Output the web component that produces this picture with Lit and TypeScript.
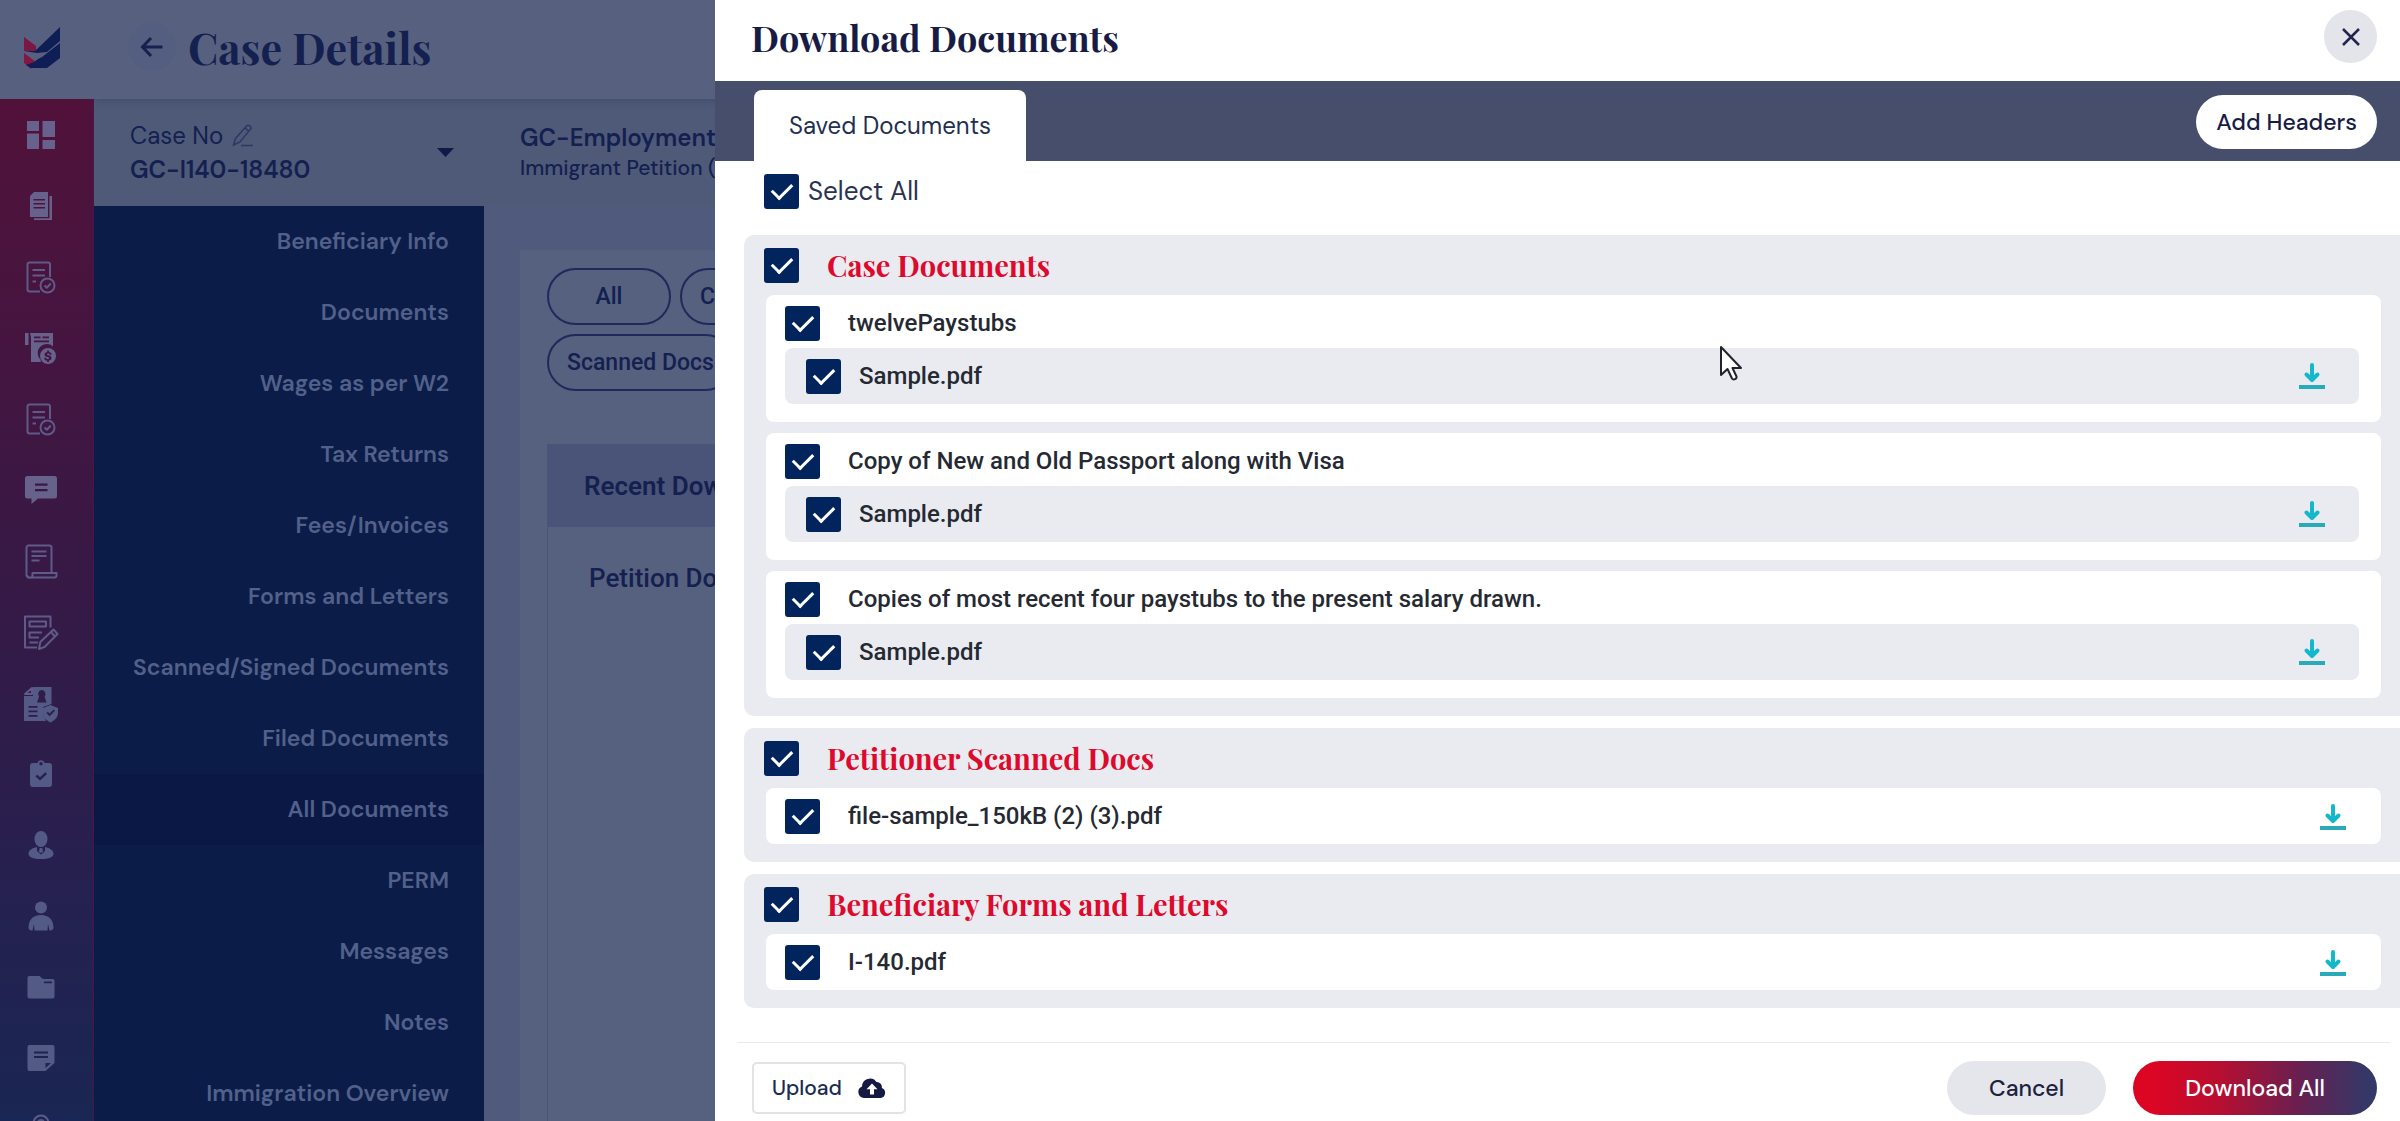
import { LitElement, html, css, svg, nothing, TemplateResult, SVGTemplateResult } from "lit";
import { customElement, state } from "lit/decorators.js";
import { classMap } from "lit/directives/class-map.js";

interface DocItem {
  id: string;
  name: string;
  files?: { id: string; name: string }[];
}
interface DocGroup {
  id: string;
  title: string;
  items: DocItem[];
}

const GROUPS: DocGroup[] = [
  {
    id: "case",
    title: "Case Documents",
    items: [
      { id: "case-1", name: "twelvePaystubs", files: [{ id: "case-1-1", name: "Sample.pdf" }] },
      { id: "case-2", name: "Copy of New and Old Passport along with Visa", files: [{ id: "case-2-1", name: "Sample.pdf" }] },
      {
        id: "case-3",
        name: "Copies of most recent four paystubs to the present salary drawn.",
        files: [{ id: "case-3-1", name: "Sample.pdf" }],
      },
    ],
  },
  { id: "petitioner", title: "Petitioner Scanned Docs", items: [{ id: "petitioner-1", name: "file-sample_150kB (2) (3).pdf" }] },
  { id: "forms", title: "Beneficiary Forms and Letters", items: [{ id: "forms-1", name: "I-140.pdf" }] },
];

const MENU = [
  "Beneficiary Info",
  "Documents",
  "Wages as per W2",
  "Tax Returns",
  "Fees/Invoices",
  "Forms and Letters",
  "Scanned/Signed Documents",
  "Filed Documents",
  "All Documents",
  "PERM",
  "Messages",
  "Notes",
  "Immigration Overview",
];

const checkedDoc = svg`
  <path class="line" d="M17 32.500H6.500a2 2 0 0 1-2-2V5.500a2 2 0 0 1 2-2h18.500a2 2 0 0 1 2 2V18"/>
  <path class="line" d="M9.500 11H22M9.500 16.500H22M9.500 22.500h3.500"/>
  <circle class="line" cx="24.500" cy="26.500" r="7"/>
  <path class="line" d="M21.500 26.500l2.300 2.300 4-4.300"/>`;

const RAIL: { label: string; icon: SVGTemplateResult }[] = [
  {
    label: "Dashboard",
    icon: svg`<path d="M4 4h12v10H4zM19.500 4h12.500v16H19.500zM4 16.500h12V32H4zM19.500 23h12.500v9H19.500z"/>`,
  },
  {
    label: "Cases",
    icon: svg`<path fill-rule="evenodd" d="M11 4h14v25H7V8zM10.500 11v1.600H22V11zM10.500 15v1.600H22V15zM10.500 19v1.600H22V19z"/><path d="M26.500 8H29v24H11v-1.800h15.500z"/>`,
  },
  { label: "Tasks", icon: checkedDoc },
  {
    label: "Billing",
    icon: svg`<path d="M2 3h3.500v12H2z"/><path fill-rule="evenodd" d="M7 3h23v13.500a9 9 0 0 0-12.500 13.200L18 32H8V8zM11 6.500v1.700h6.500V6.500zM19.500 6.500v1.700H26V6.500zM11 10.500v1.700h15v-1.700z"/><path fill-rule="evenodd" d="M25 18a8 8 0 1 1 0 16 8 8 0 0 1 0-16zm-.8 2.500v1.400c-3.800.6-3.300 4.700.3 5.100 2.300.3 1.900 2 .4 2-1.200 0-1.700-.4-1.800-1.300h-2c.1 1.600 1.200 2.700 3.100 3v1.300h1.700v-1.400c3.800-.6 3.300-4.900-.2-5.300-2.300-.3-1.900-1.800-.5-1.800 1 0 1.500.4 1.600 1.200h2c-.1-1.500-1.200-2.500-2.900-2.800v-1.400z"/>`,
  },
  { label: "Approvals", icon: checkedDoc },
  {
    label: "Messages",
    icon: svg`<path fill-rule="evenodd" d="M4.500 4h27A2.500 2.500 0 0 1 34 6.500V24a2.500 2.500 0 0 1-2.500 2.500H15L8.500 32v-5.500h-4A2.500 2.500 0 0 1 2 24V6.500A2.500 2.500 0 0 1 4.500 4zM12 11.500v2.200h12.500v-2.200zM12 17v2.200h12.500V17z"/>`,
  },
  {
    label: "Forms",
    icon: svg`<path class="line" d="M28.500 29V4.500a2 2 0 0 0-2-2H5.500a2 2 0 0 0-2 2v27.500a3 3 0 0 0 3 2.500h25a2 2 0 0 0 2-2V30h-24v2.200a2.600 2.600 0 0 1-5.200 0"/><path class="line" d="M8.500 8.500h15M8.500 13h15M8.500 17.500h8"/>`,
  },
  {
    label: "Drafts",
    icon: svg`<path class="line" d="M14 33.500H2V2.500h25.500v11M6.500 7.500h16.500v5H6.500zM16 23.500H6.500v-5H19M6.500 28.500h8.500"/><path class="line" d="M16 35l1.300-7L30.500 15.500l4 4.500L21.500 33zM28 18l4 4.500"/>`,
  },
  {
    label: "Identity",
    icon: svg`<path fill-rule="evenodd" d="M10 2h18.500v17l-8.500 3v7l3 7H1V11h9zM19 5a4 4 0 0 0-3 6.500l-2 6h9.500l-2-6A4 4 0 0 0 19 5zM5.500 21v1.800h9V21zM5.500 25.500v1.800h9v-1.800zM5.500 30v1.800h9V30z"/><path class="line" d="M2 9l7-6v6z"/><path fill-rule="evenodd" d="M27.500 20l7.500 3v5c0 4.500-3.500 7.500-7.500 9.500-4-2-7.500-5-7.500-9.500v-5zm-4 8l3 3.200 5.500-5.500-1.300-1.300-4.200 4.200-1.700-1.800z"/>`,
  },
  {
    label: "Checklist",
    icon: svg`<path fill-rule="evenodd" d="M14.500 7a3.600 3.600 0 0 1 7 0H26a3 3 0 0 1 3 3v18a3 3 0 0 1-3 3H10a3 3 0 0 1-3-3V10a3 3 0 0 1 3-3zM18 6a1.700 1.700 0 1 0 0 3.400A1.700 1.700 0 0 0 18 6zm-5.500 14.500l4.500 4 7-6.500-1.700-1.800-5.300 5-2.900-2.700z"/>`,
  },
  {
    label: "Attorneys",
    icon: svg`<ellipse cx="18" cy="12" rx="6.500" ry="8"/><path fill-rule="evenodd" d="M5.500 27c0-4 4-6 8.500-7v4l4 3.500 4-3.500v-4c4.500 1 8.500 3 8.500 7 0 3-5 5-12.500 5S5.500 30 5.500 27z"/><path d="M16.800 21h2.400l1 3.500L18 26l-2.200-1.500z"/>`,
  },
  {
    label: "Clients",
    icon: svg`<circle cx="18" cy="9.500" r="6"/><path d="M5.500 30c0-8 4.500-13 12.500-13s12.500 5 12.500 13c-.5 2-2 2.500-4 2.500l-1.500-6.500-.5 6.500h-13L11 26l-1.500 6.500c-2 0-3.500-.5-4-2.500z"/>`,
  },
  {
    label: "Folders",
    icon: svg`<path fill-rule="evenodd" d="M7 7h9.500l3.500 3h9.500a2 2 0 0 1 2 2v15.500a2 2 0 0 1-2 2h-23a2 2 0 0 1-2-2V9A2 2 0 0 1 7 7zm14 5.500v1.800h8v-1.800z"/>`,
  },
  {
    label: "Notes",
    icon: svg`<path fill-rule="evenodd" d="M6.500 5h23a2 2 0 0 1 2 2v16l-9 8h-16a2 2 0 0 1-2-2V7a2 2 0 0 1 2-2zM11 11.500v2h14v-2zM11 16v2h14v-2zM22.500 23v5l5.500-5z"/>`,
  },
  { label: "Account", icon: svg`<circle class="line" cx="18" cy="12" r="7.500"/><circle cx="18" cy="12" r="4"/>` },
];

@customElement("app-root")
export class AppRoot extends LitElement {
  @state() private cleared: Set<string> = new Set();

  static styles = css`
    :host {
      --serif: "Playfair Display", "Liberation Serif", serif;
      --sans: "DM Sans", Inter, sans-serif;
      --roboto: Roboto, sans-serif;
      --navy: #02245c;
      --dim-ink: #14204f;
      display: block;
      position: relative;
      height: 100vh;
      overflow: hidden;
      font-family: var(--sans);
      color: #1c2340;
    }
    * {
      box-sizing: border-box;
    }
    h1, h2, h3, p, ul {
      margin: 0;
      padding: 0;
    }
    button {
      margin: 0;
      padding: 0;
      border: 0;
      background: none;
      font: inherit;
      color: inherit;
      cursor: pointer;
    }
    svg {
      display: block;
      flex: none;
    }

    /* dimmed case page */
    .page {
      display: grid;
      grid-template-columns: 94px 1fr;
      grid-template-rows: 99px 1fr;
      height: 100%;
      background: #4f5a79;
      color: var(--dim-ink);
    }
    .brand,
    .topbar {
      display: flex;
      align-items: center;
      background: #57617f;
    }
    .brand {
      justify-content: center;
      padding-right: 10px;
      padding-bottom: 4px;
    }
    .topbar {
      gap: 12px;
      padding: 0 0 6px 34px;
      box-shadow: 0 3px 6px rgba(40, 50, 90, 0.25);
      clip-path: inset(0 0 -10px 0);
    }
    .back {
      display: grid;
      place-items: center;
      width: 48px;
      height: 48px;
      border-radius: 24px;
      background: #545e80;
    }
    .topbar h1 {
      font: 700 43px/56px var(--serif);
    }
    .rail {
      display: flex;
      flex-direction: column;
      align-items: stretch;
      position: relative;
      min-height: 0;
      overflow: hidden;
      background: linear-gradient(180deg, #51123a 0%, #441540 25%, #341a47 52%, #252150 78%, #1a2653 100%);
      border-right: 1px solid #451845;
    }
    .rail a {
      display: flex;
      flex: none;
      justify-content: center;
      align-items: center;
      height: 71px;
      padding: 2px 11px 0 0;
    }
    .rail svg {
      fill: #66628c;
    }
    .rail a:nth-child(n + 9) svg {
      fill: #545a86;
    }
    .rail .line {
      fill: none;
      stroke: #5f5a88;
      stroke-width: 2;
      stroke-linejoin: round;
    }
    .work {
      display: grid;
      grid-template-columns: 390px 1fr;
      grid-template-rows: 107px 1fr;
      min-height: 0;
    }
    .caseno {
      display: flex;
      justify-content: space-between;
      align-items: center;
      padding: 0 30px 0 36px;
    }
    .caseno p {
      font-size: 24px;
      line-height: 34px;
    }
    .label {
      display: flex;
      align-items: center;
      gap: 9px;
    }
    .caseno .number {
      font-weight: 600;
    }
    .casetype {
      padding: 23px 36px;
      white-space: nowrap;
    }
    .casetype .kind {
      font-size: 24px;
      font-weight: 600;
      line-height: 32px;
    }
    .casetype .form {
      font-size: 21px;
      font-weight: 500;
      line-height: 28px;
    }
    .menu {
      min-height: 0;
      overflow: hidden;
      background: #0c1c49;
    }
    .menu a {
      display: flex;
      justify-content: flex-end;
      align-items: center;
      height: 71px;
      padding: 0 35px 2px 0;
      font-size: 23px;
      font-weight: 600;
      color: #52618a;
      text-decoration: none;
      white-space: nowrap;
    }
    .menu a.active {
      background: #0b1846;
    }
    .content {
      min-height: 0;
      padding: 44px 36px 0;
      background: #4f5a7d;
    }
    .card {
      height: 100%;
      padding: 18px 27px 0;
      background: #56607f;
    }
    .chips {
      display: flex;
      flex-direction: column;
      gap: 9px;
    }
    .chiprow {
      display: flex;
      gap: 9px;
    }
    .chip {
      min-width: 124px;
      height: 57px;
      padding: 0 18px;
      border: 2px solid #1e2a5b;
      border-radius: 29px;
      font: 500 23px/53px var(--roboto);
      white-space: nowrap;
    }
    .recent {
      height: 100%;
      margin-top: 53px;
      border: 1px solid #4a5476;
      font-family: var(--roboto);
      font-size: 26px;
    }
    .recent h2 {
      padding: 0 36px;
      background: #4a5478;
      font-size: 26px;
      font-weight: 600;
      line-height: 82px;
    }
    .recent p {
      padding: 0 41px;
      font-weight: 500;
      line-height: 103px;
    }

    /* drawer */
    .drawer {
      position: absolute;
      inset: 0 0 0 auto;
      display: flex;
      flex-direction: column;
      width: calc(100% - 715px);
      background: #fff;
    }
    .head {
      display: flex;
      justify-content: space-between;
      align-items: center;
      padding: 10px 23px 18px 36px;
    }
    .head h2 {
      font: 700 36px/52px var(--serif);
      color: #181c45;
    }
    .close {
      display: grid;
      place-items: center;
      width: 53px;
      height: 53px;
      border-radius: 27px;
      background: #e3e5eb;
    }
    .tabs {
      display: flex;
      justify-content: space-between;
      align-items: flex-end;
      height: 80px;
      padding: 0 23px 0 39px;
      background: #464e6c;
    }
    .tab {
      height: 71px;
      padding: 0 35px;
      border-radius: 8px 8px 0 0;
      background: #fff;
      font-size: 24px;
      color: #1f3050;
    }
    .pill {
      height: 54px;
      border-radius: 27px;
      font-size: 23px;
      font-weight: 500;
      text-align: center;
      white-space: nowrap;
    }
    .headers {
      margin-bottom: 12px;
      padding: 0 20px;
      background: #fff;
      color: #181c45;
    }
    .body {
      flex: 1;
      min-height: 0;
      overflow: hidden;
      padding: 13px 0 0 29px;
    }
    input[type="checkbox"] {
      appearance: none;
      display: grid;
      place-items: center;
      flex: none;
      width: 35px;
      height: 35px;
      margin: 0;
      border: 2px solid var(--navy);
      border-radius: 3px;
      background: #fff;
      cursor: pointer;
    }
    input[type="checkbox"]:checked {
      background: var(--navy);
    }
    input[type="checkbox"]:checked::after {
      content: "";
      width: 9px;
      height: 17px;
      margin-bottom: 5px;
      border: solid #fff;
      border-width: 0 3px 3px 0;
      transform: rotate(45deg);
    }
    .all {
      display: flex;
      align-items: center;
      gap: 9px;
      margin-bottom: 26px;
      padding-left: 20px;
      font-size: 26px;
      line-height: 35px;
      color: #2a3350;
    }
    .group {
      margin-bottom: 12px;
      padding: 13px 19px 18px 22px;
      border-radius: 10px 0 0 10px;
      background: #e9ebf0;
    }
    .grouphead {
      display: flex;
      align-items: center;
      gap: 28px;
      margin: 0 0 12px -2px;
    }
    .grouphead h3 {
      font: 700 29px/35px var(--serif);
      color: #dc0a2d;
    }
    .item {
      padding: 11px 22px 10px 19px;
      border-radius: 8px;
      background: #fff;
      font: 500 24px/35px var(--roboto);
      color: #252932;
    }
    .item + .item {
      margin-top: 11px;
    }
    .item.nested {
      padding-bottom: 18px;
    }
    .row,
    .file {
      display: flex;
      align-items: center;
    }
    .row {
      gap: 28px;
    }
    .file {
      gap: 18px;
      height: 56px;
      margin-top: 7px;
      padding: 0 34px 0 21px;
      border-radius: 8px;
      background: #e9ebf0;
    }
    .get {
      margin-left: auto;
    }
    .row .get {
      margin-right: 13px;
    }
    .foot {
      display: flex;
      align-items: center;
      gap: 27px;
      margin: 0 10px 0 22px;
      padding: 18px 13px 6px 15px;
      border-top: 1px solid #e9ebee;
    }
    .upload {
      display: flex;
      align-items: center;
      gap: 16px;
      height: 52px;
      margin-right: auto;
      padding: 0 18px;
      border: 2px solid #e1e3e6;
      border-radius: 5px;
      font-size: 21px;
      font-weight: 500;
      color: #1b2c50;
    }
    .cancel {
      padding: 0 42px;
      background: #e5e5ec;
    }
    .go {
      padding: 0 52px;
      background: linear-gradient(90deg, #dc0524 8%, #b80e30 35%, #642152 70%, #343868 96%);
      color: #fff;
    }
    .cursor {
      position: absolute;
      left: 1719px;
      top: 345px;
      pointer-events: none;
    }
  `;

  private get ids(): string[] {
    return GROUPS.flatMap((g) => this.under(g));
  }

  private under(g: DocGroup): string[] {
    return [g.id, ...g.items.flatMap((i) => this.underItem(i))];
  }

  private underItem(i: DocItem): string[] {
    return [i.id, ...(i.files ?? []).map((f) => f.id)];
  }

  private toggle(ids: string[], on: boolean) {
    const next = new Set(this.cleared);
    ids.forEach((id) => (on ? next.delete(id) : next.add(id)));
    this.cleared = next;
  }

  private box(id: string, ids: string[]): TemplateResult {
    return html`<input
      type="checkbox"
      id=${id}
      .checked=${ids.every((x) => !this.cleared.has(x))}
      @change=${(e: Event) => this.toggle(ids, (e.target as HTMLInputElement).checked)}
    />`;
  }

  private download(name: string): TemplateResult {
    return html`<button class="get" aria-label="Download ${name}">
      <svg width="26" height="26" viewBox="0 0 26 26">
        <path
          d="M13 2v14M7.500 11.500L13 17l5.500-5.500"
          fill="none"
          stroke="#14b8cb"
          stroke-width="4"
          stroke-linejoin="round"
          stroke-linecap="round"
        />
        <path d="M0 22h26v4H0z" fill="#2aa9b8" />
      </svg>
    </button>`;
  }

  private item(i: DocItem): TemplateResult {
    return html`<div class=${classMap({ item: true, nested: !!i.files })}>
      <div class="row">
        ${this.box(i.id, this.underItem(i))}
        <label for=${i.id}>${i.name}</label>
        ${i.files ? nothing : this.download(i.name)}
      </div>
      ${(i.files ?? []).map(
        (f) => html`<div class="file">
          ${this.box(f.id, [f.id])}
          <label for=${f.id}>${f.name}</label>
          ${this.download(f.name)}
        </div>`
      )}
    </div>`;
  }

  private page(): TemplateResult {
    return html`<div class="page">
      <div class="brand">
        <svg width="38" height="42" viewBox="0 0 38 42">
          <path d="M1 10l12 9v5H1z" fill="#7a1742" />
          <path d="M1 26l12 9-5 7-7-6z" fill="#861543" />
          <path d="M1 24L12 24 37 0v14L24 25l-10 1z" fill="#0f1f56" />
          <path d="M37 16v15L24 41H8l-5-3 8-3 4-3 4-2z" fill="#0f1f56" />
        </svg>
      </div>
      <header class="topbar">
        <button class="back" aria-label="Back">
          <svg width="24" height="22" viewBox="0 0 24 22">
            <path d="M22.500 11H3M11 2L2.500 11l8.500 9" fill="none" stroke="#16214f" stroke-width="3" />
          </svg>
        </button>
        <h1>Case Details</h1>
      </header>
      <nav class="rail" aria-label="Sections">
        ${RAIL.map(
          (r) => html`<a href="#" aria-label=${r.label}><svg width="36" height="38" viewBox="0 0 36 38">${r.icon}</svg></a>`
        )}
      </nav>
      <div class="work">
        <div class="caseno">
          <div>
            <p class="label">
              Case No
              <svg width="22" height="24" viewBox="0 0 22 24">
                <path
                  d="M1.500 21l2-6.500L15 1.500c1.500-1 4.500 1 4 3L8 18zM13 4l4 3.500M9 21.500h12"
                  fill="none"
                  stroke="#2d3862"
                  stroke-width="1.500"
                />
              </svg>
            </p>
            <p class="number">GC-I140-18480</p>
          </div>
          <svg width="17" height="9" viewBox="0 0 17 9"><path d="M0 0h17L8.500 9z" fill="#0f1a48" /></svg>
        </div>
        <div class="casetype">
          <p class="kind">GC-Employment</p>
          <p class="form">Immigrant Petition (I-140)</p>
        </div>
        <nav class="menu" aria-label="Case">
          ${MENU.map((m) => html`<a href="#" class=${classMap({ active: m === "All Documents" })}>${m}</a>`)}
        </nav>
        <main class="content">
          <div class="card">
            <div class="chips">
              <div class="chiprow">
                <button class="chip">All</button>
                <button class="chip">Case Documents</button>
              </div>
              <div class="chiprow"><button class="chip">Scanned Docs</button></div>
            </div>
            <section class="recent">
              <h2>Recent Downloads</h2>
              <p>Petition Documents</p>
            </section>
          </div>
        </main>
      </div>
    </div>`;
  }

  render() {
    return html`
      ${this.page()}
      <section class="drawer" role="dialog" aria-label="Download Documents">
        <header class="head">
          <h2>Download Documents</h2>
          <button class="close" aria-label="Close">
            <svg width="20" height="20" viewBox="0 0 20 20">
              <path d="M2 2l16 16M18 2L2 18" stroke="#22264f" stroke-width="2.500" />
            </svg>
          </button>
        </header>
        <div class="tabs" role="tablist">
          <button class="tab" role="tab" aria-selected="true">Saved Documents</button>
          <button class="pill headers">Add Headers</button>
        </div>
        <div class="body">
          <div class="all">
            ${this.box("select-all", this.ids)}
            <label for="select-all">Select All</label>
          </div>
          ${GROUPS.map(
            (g) => html`<section class="group">
              <div class="grouphead">
                ${this.box(g.id, this.under(g))}
                <h3><label for=${g.id}>${g.title}</label></h3>
              </div>
              ${g.items.map((i) => this.item(i))}
            </section>`
          )}
        </div>
        <footer class="foot">
          <button class="upload">
            Upload
            <svg width="28" height="20" viewBox="0 0 28 20">
              <path
                fill-rule="evenodd"
                d="M6 20a6 6 0 0 1-2-11.500A8 8 0 0 1 18.500 4a5 5 0 0 1 5.300 6A5.200 5.200 0 0 1 22.500 20zM14 5.500l-5.500 5.700H12V16.500h4v-5.300h3.500z"
                fill="#141a42"
              />
            </svg>
          </button>
          <button class="pill cancel">Cancel</button>
          <button class="pill go">Download All</button>
        </footer>
      </section>
      <svg class="cursor" width="26" height="38" viewBox="0 0 26 38">
        <path
          d="M2 2v28l6.500-6 4.500 9.500c1.500 2 5 .5 4.500-2L13.500 23H22z"
          fill="#fff"
          stroke="#20222e"
          stroke-width="2"
          stroke-linejoin="round"
        />
      </svg>
    `;
  }
}
